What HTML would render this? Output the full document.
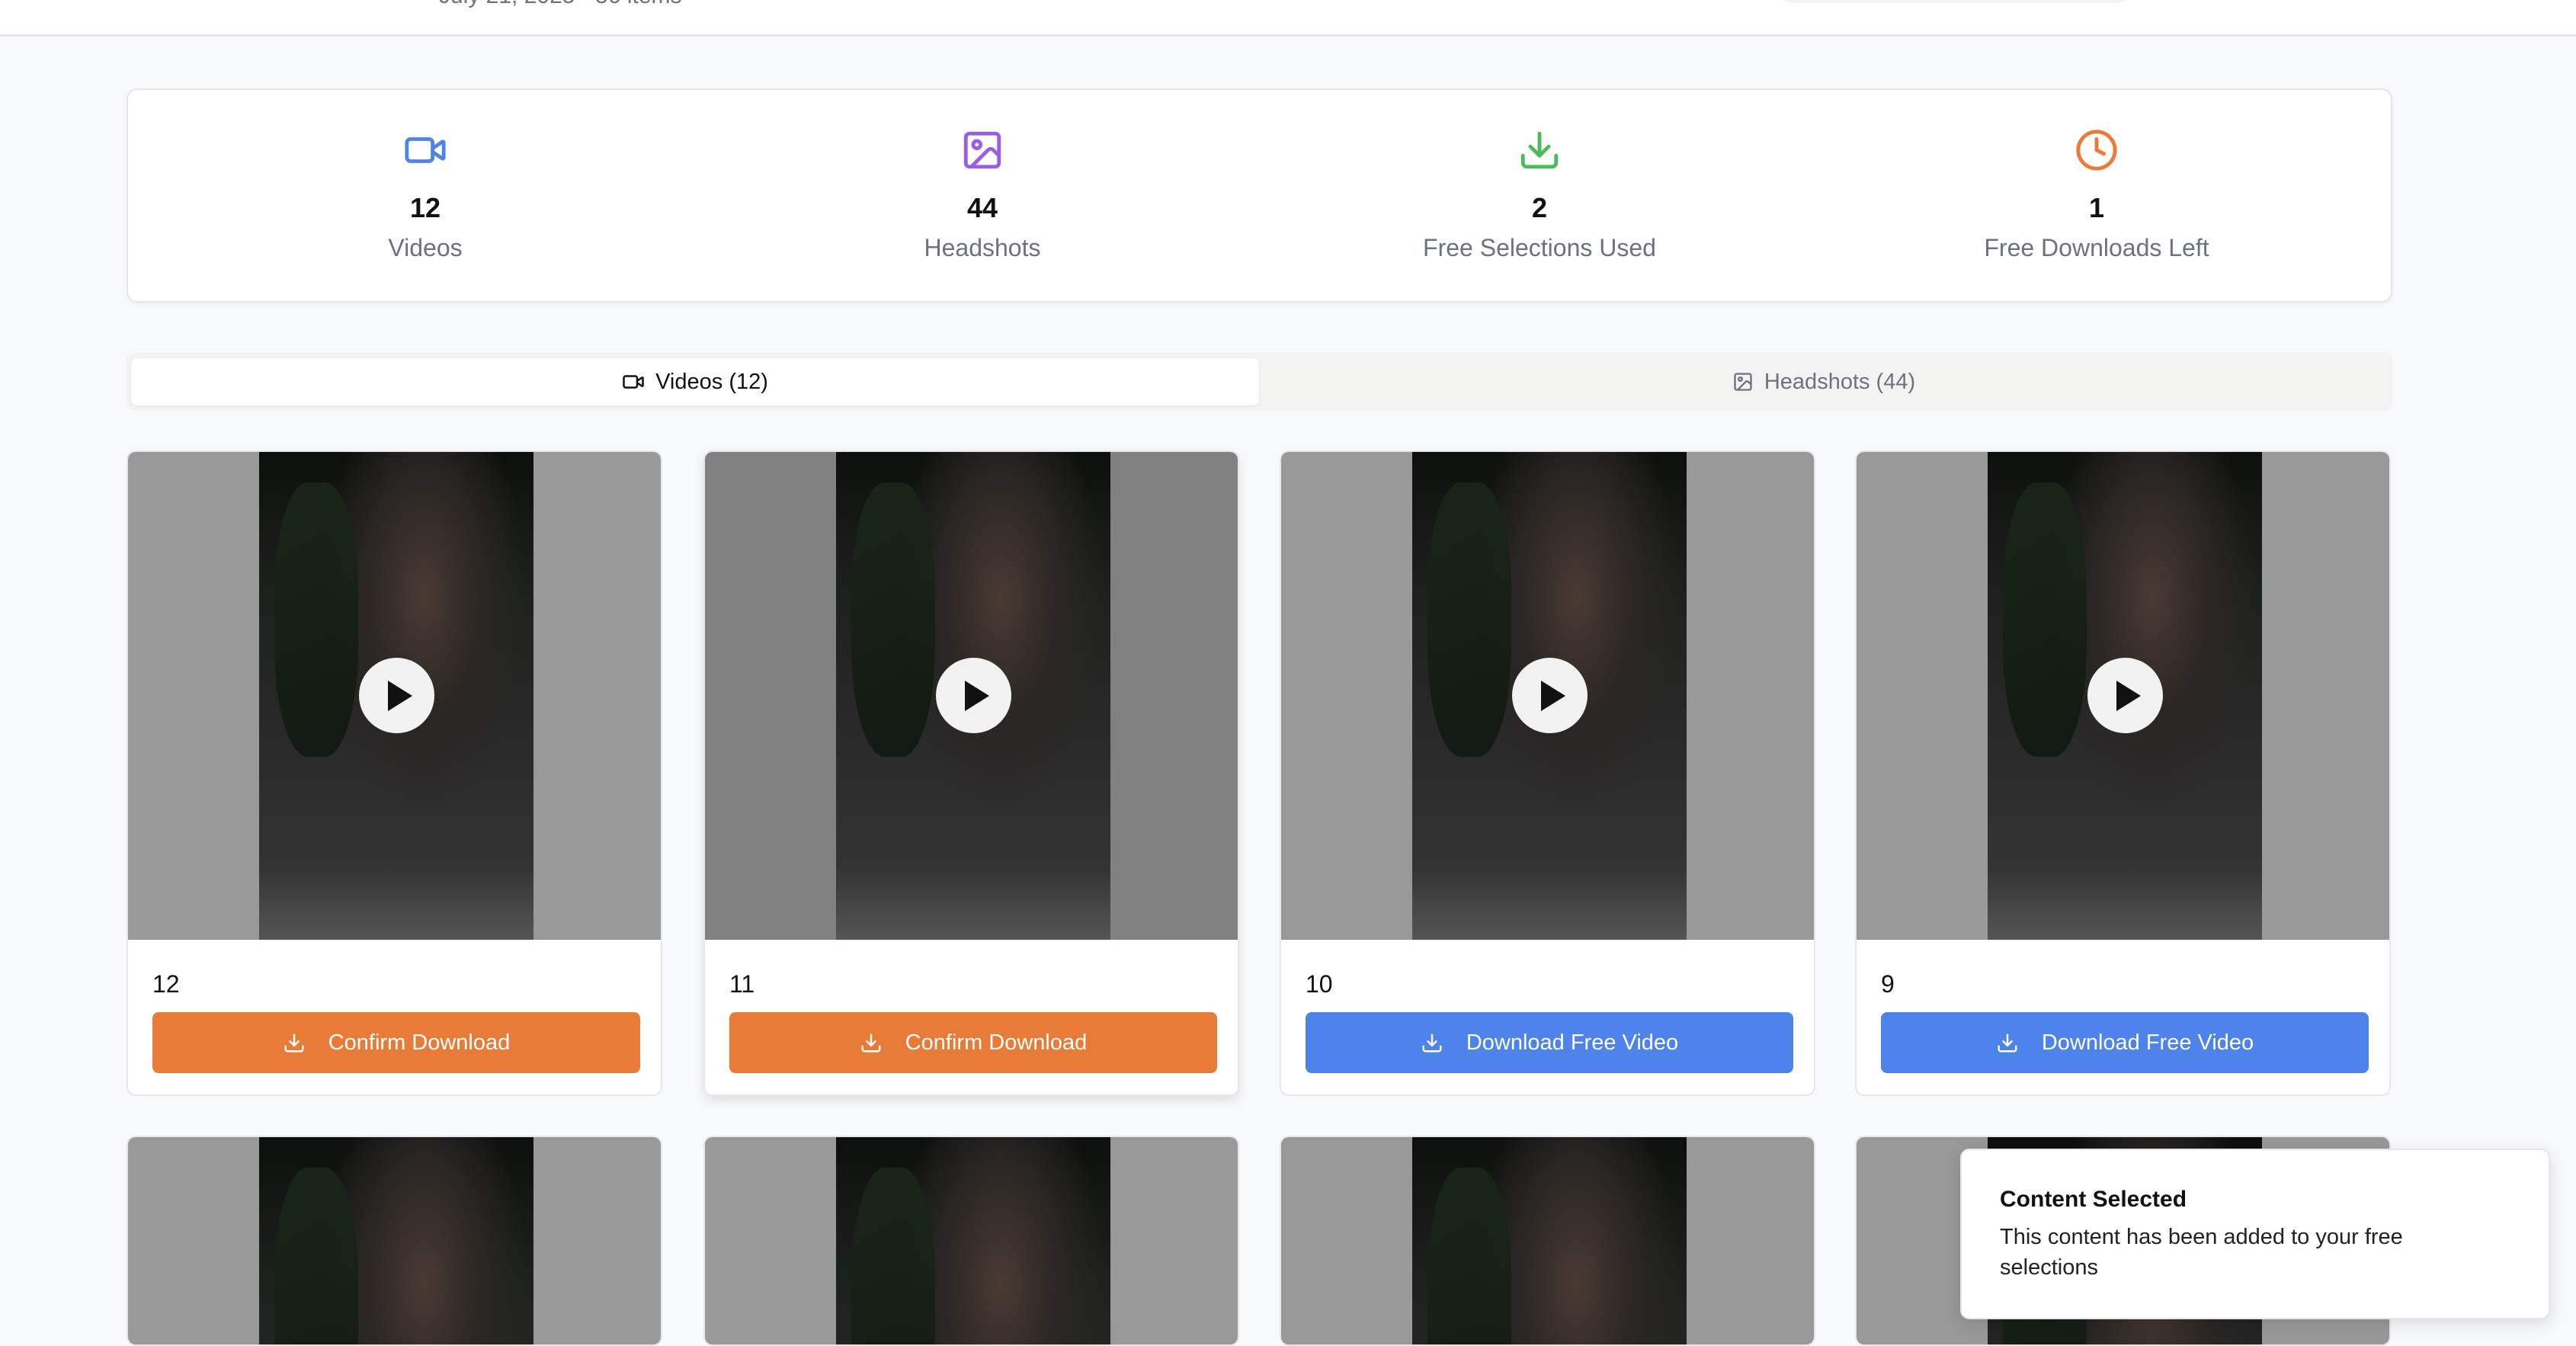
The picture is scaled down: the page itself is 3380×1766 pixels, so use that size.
<!DOCTYPE html>
<html><head><meta charset="utf-8"><style>
*{box-sizing:border-box;margin:0;padding:0}
html,body{width:3380px;height:1766px;overflow:hidden}
body{background:#f8f9fa;font-family:"Liberation Sans",sans-serif;position:relative}
.hdr{position:absolute;left:0;top:0;width:3380px;height:48px;background:#fff;border-bottom:3px solid #e5e7eb}
.hdr .t{position:absolute;left:576px;top:-22px;font-size:30px;color:#6b7280}
.hdr .p{position:absolute;left:2338px;top:-20px;width:452px;height:24px;border-radius:14px;background:#f3f4f6}
.stats{position:absolute;left:166px;top:116px;width:2973px;height:281px;background:#fff;border:2px solid #e5e7eb;border-radius:14px;box-shadow:0 2px 4px rgba(0,0,0,.05)}
.st{position:absolute;top:50px;width:500px;margin-left:-250px;text-align:center}
.st svg{display:block;margin:0 auto;width:58px;height:58px}
.st .n{font-size:36px;font-weight:bold;color:#111;margin-top:26px;line-height:42px}
.st .l{font-size:32px;color:#6b7280;margin-top:12px;line-height:38px}
.tabs{position:absolute;left:166px;top:463px;width:2973px;height:76px;background:#f3f3f1;border-radius:10px}
.tab{position:absolute;top:7px;height:62px;width:1480px;border-radius:8px;display:flex;align-items:center;justify-content:center;font-size:29px;gap:14px}
.tab.a{left:6px;background:#fff;color:#111;box-shadow:0 1px 3px rgba(0,0,0,.08)}
.tab.b{left:1487px;color:#6b7280}
.card{position:absolute;width:703px;height:847px;background:#fff;border:2px solid #e5e7eb;border-radius:12px;overflow:hidden}
.th{position:absolute;left:0;top:0;width:100%;height:640px;background:#999}
.vid{position:absolute;left:172px;top:0;width:360px;height:640px;background:radial-gradient(ellipse at 60% 30%,#4a3a33 0,#2a2624 25%,transparent 45%),linear-gradient(180deg,#0d0f0d 0,#1d211d 30%,#2a2a2a 60%,#333 85%,#555 100%)}
.vid:before{content:"";position:absolute;left:20px;top:40px;width:110px;height:360px;background:linear-gradient(160deg,#1a2a1a,#0c140c);opacity:.8;border-radius:40%}
.play{position:absolute;left:303px;top:270px;width:99px;height:99px;border-radius:50%;background:#f2f2f2}
.play:after{content:"";position:absolute;left:38px;top:30px;border-left:32px solid #111;border-top:20px solid transparent;border-bottom:20px solid transparent}
.num{position:absolute;left:32px;top:680px;font-size:32px;color:#111}
.btn{position:absolute;left:32px;top:735px;width:640px;height:80px;border-radius:8px;color:#fff;font-size:29px;display:flex;align-items:center;justify-content:center;gap:30px}
.o{background:#e87b37}.bl{background:#4f83ec}
.toast{position:absolute;left:2572px;top:1507px;width:774px;height:224px;background:#fff;border:2px solid #e5e7eb;border-radius:12px;box-shadow:0 6px 20px rgba(0,0,0,.12);padding:48px 50px}
.toast b{display:block;font-size:30px;color:#111;margin-bottom:12px}
.toast p{font-size:29px;line-height:40px;color:#222;width:560px}
</style></head><body>
<div class="hdr"><div class="t">July 21, 2025 · 56 items</div><div class="p"></div></div>

<div class="stats">
 <div class="st" style="left:390px"><svg viewBox="0 0 24 24" fill="none" stroke="#4f83ec" stroke-width="2" stroke-linecap="round" stroke-linejoin="round"><path d="m16 13 5.2 3.5a.5.5 0 0 0 .8-.4V7.9a.5.5 0 0 0-.8-.4L16 11"/><rect x="2" y="6" width="14" height="12" rx="2"/></svg><div class="n">12</div><div class="l">Videos</div></div>
 <div class="st" style="left:1121px"><svg viewBox="0 0 24 24" fill="none" stroke="#9b5de5" stroke-width="2" stroke-linecap="round" stroke-linejoin="round"><rect x="3" y="3" width="18" height="18" rx="2"/><circle cx="9" cy="9" r="2"/><path d="m21 15-3.1-3.1a2 2 0 0 0-2.8 0L6 21"/></svg><div class="n">44</div><div class="l">Headshots</div></div>
 <div class="st" style="left:1852px"><svg viewBox="0 0 24 24" fill="none" stroke="#4cbb5c" stroke-width="2" stroke-linecap="round" stroke-linejoin="round"><path d="M21 15v4a2 2 0 0 1-2 2H5a2 2 0 0 1-2-2v-4"/><path d="m7 10 5 5 5-5"/><path d="M12 15V3"/></svg><div class="n">2</div><div class="l">Free Selections Used</div></div>
 <div class="st" style="left:2583px"><svg viewBox="0 0 24 24" fill="none" stroke="#ec7a35" stroke-width="2" stroke-linecap="round" stroke-linejoin="round"><circle cx="12" cy="12" r="10"/><path d="M12 6v6l4 2"/></svg><div class="n">1</div><div class="l">Free Downloads Left</div></div>
</div>

<div class="tabs">
 <div class="tab a"><svg width="30" height="30" viewBox="0 0 24 24" fill="none" stroke="#111" stroke-width="2"><path d="m16 13 5.2 3.5a.5.5 0 0 0 .8-.4V7.9a.5.5 0 0 0-.8-.4L16 11"/><rect x="2" y="6" width="14" height="12" rx="2"/></svg>Videos (12)</div>
 <div class="tab b"><svg width="28" height="28" viewBox="0 0 24 24" fill="none" stroke="#6b7280" stroke-width="2"><rect x="3" y="3" width="18" height="18" rx="2"/><circle cx="9" cy="9" r="2"/><path d="m21 15-3.1-3.1a2 2 0 0 0-2.8 0L6 21"/></svg>Headshots (44)</div>
</div>

<div class="card" style="left:166px;top:591px"><div class="th"><div class="vid"></div><div class="play"></div></div><div class="num">12</div><div class="btn o"><svg width="30" height="30" viewBox="0 0 24 24" fill="none" stroke="#fff" stroke-width="2"><path d="M21 15v4a2 2 0 0 1-2 2H5a2 2 0 0 1-2-2v-4"/><path d="m7 10 5 5 5-5"/><path d="M12 15V3"/></svg>Confirm Download</div></div>
<div class="card" style="left:923px;top:591px;box-shadow:0 6px 14px rgba(0,0,0,.1)"><div class="th" style="background:#818181"><div class="vid"></div><div class="play"></div></div><div class="num">11</div><div class="btn o"><svg width="30" height="30" viewBox="0 0 24 24" fill="none" stroke="#fff" stroke-width="2"><path d="M21 15v4a2 2 0 0 1-2 2H5a2 2 0 0 1-2-2v-4"/><path d="m7 10 5 5 5-5"/><path d="M12 15V3"/></svg>Confirm Download</div></div>
<div class="card" style="left:1679px;top:591px"><div class="th"><div class="vid"></div><div class="play"></div></div><div class="num">10</div><div class="btn bl"><svg width="30" height="30" viewBox="0 0 24 24" fill="none" stroke="#fff" stroke-width="2"><path d="M21 15v4a2 2 0 0 1-2 2H5a2 2 0 0 1-2-2v-4"/><path d="m7 10 5 5 5-5"/><path d="M12 15V3"/></svg>Download Free Video</div></div>
<div class="card" style="left:2434px;top:591px"><div class="th"><div class="vid"></div><div class="play"></div></div><div class="num">9</div><div class="btn bl"><svg width="30" height="30" viewBox="0 0 24 24" fill="none" stroke="#fff" stroke-width="2"><path d="M21 15v4a2 2 0 0 1-2 2H5a2 2 0 0 1-2-2v-4"/><path d="m7 10 5 5 5-5"/><path d="M12 15V3"/></svg>Download Free Video</div></div>

<div class="card" style="left:166px;top:1490px;height:276px"><div class="th"><div class="vid"></div></div></div>
<div class="card" style="left:923px;top:1490px;height:276px"><div class="th"><div class="vid"></div></div></div>
<div class="card" style="left:1679px;top:1490px;height:276px"><div class="th"><div class="vid"></div></div></div>
<div class="card" style="left:2434px;top:1490px;height:276px"><div class="th"><div class="vid"></div></div></div>

<div class="toast"><b>Content Selected</b><p>This content has been added to your free selections</p></div>
</body></html>
